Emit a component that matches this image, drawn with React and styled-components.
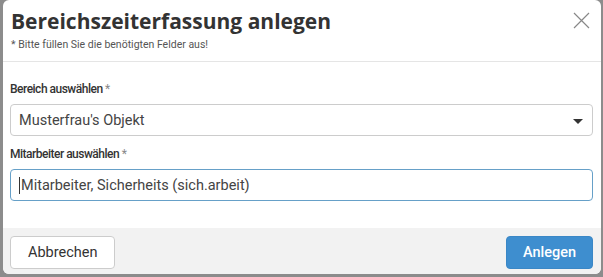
import React from 'react';
import styled, { createGlobalStyle } from 'styled-components';

const GlobalStyle = createGlobalStyle`
  html, body {
    margin: 0;
    padding: 0;
    background: #8c8c8c;
    font-family: Roboto, "Liberation Sans", sans-serif;
  }
`

const Backdrop = styled.div`
  width: 603px;
  height: 277px;
  padding: 0 2px 3px 3px;
  box-sizing: border-box;
`
const Modal = styled.div`
  height: 100%;
  background: #fff;
  border-radius: 6px;
  overflow: hidden;
  display: flex;
  flex-direction: column;
`
const Header = styled.div`
  position: relative;
  padding: 5px 8px 10px 8px;
  border-bottom: 1px solid #e5e5e5;
`
const Title = styled.h4`
  margin: 0;
  font-family: "Open Sans", Roboto, sans-serif;
  font-size: 21px;
  font-weight: 700;
  color: #333;
  line-height: 32px;
`
const Hint = styled.div`
  margin-top: 1px;
  font-size: 10.5px;
  color: #555;
`
const Close = styled.button`
  position: absolute;
  top: 11px;
  right: 10px;
  width: 19px;
  height: 19px;
  padding: 0;
  border: 0;
  background: none;
  cursor: pointer;
`
const Body = styled.div`
  flex: 1;
  padding: 20px 8px 0 7px;
`
const Group = styled.div`
  margin-bottom: 11px;
`
const Label = styled.label`
  display: block;
  font-size: 12px;
  line-height: 14px;
  font-weight: 500;
  letter-spacing: -0.5px;
  color: #333;
  margin-bottom: 8px;
`
const Required = styled.span`
  color: #888;
  font-weight: 400;
`
const Field = styled.div`
  position: relative;
  height: 32px;
  box-sizing: border-box;
  border: 1px solid ${p => (p.focused ? '#66a0c8' : '#ccc')};
  border-radius: 4px;
  display: flex;
  align-items: center;
  padding: 0 8px;
  font-size: 14.5px;
  color: #444;
`
const Caret = styled.span`
  position: absolute;
  right: 9px;
  top: 14px;
  border-left: 5px solid transparent;
  border-right: 5px solid transparent;
  border-top: 5px solid #333;
`
const TextCursor = styled.span`
  width: 1px;
  height: 17px;
  background: #333;
  margin-right: 1px;
`
const Footer = styled.div`
  background: #f2f2f2;
  padding: 8px 8px 5px 7px;
  display: flex;
  justify-content: space-between;
`
const Button = styled.button`
  height: 33px;
  padding: 0 ${p => (p.primary ? 16 : 17)}px;
  border-radius: 4px;
  font-family: Roboto, "Liberation Sans", sans-serif;
  font-size: 14.5px;
  border: 1px solid ${p => (p.primary ? '#3a87c6' : '#ccc')};
  background: ${p => (p.primary ? '#3e8ecf' : '#fff')};
  color: ${p => (p.primary ? '#fff' : '#333')};
  font-weight: ${p => (p.primary ? 500 : 400)};
`

export default function App() {
  return (
    <Backdrop>
      <GlobalStyle />
      <Modal>
        <Header>
          <Title>Bereichszeiterfassung anlegen</Title>
          <Hint>* Bitte füllen Sie die benötigten Felder aus!</Hint>
          <Close aria-label="Schließen">
            <svg width="19" height="19" viewBox="0 0 19 19">
              <path d="M2 2L17 17M17 2L2 17" stroke="#888" strokeWidth="1.2" fill="none" />
            </svg>
          </Close>
        </Header>
        <Body>
          <Group>
            <Label>Bereich auswählen <Required>*</Required></Label>
            <Field>
              Musterfrau's Objekt
              <Caret />
            </Field>
          </Group>
          <Group>
            <Label>Mitarbeiter auswählen <Required>*</Required></Label>
            <Field focused>
              <TextCursor />
              Mitarbeiter, Sicherheits (sich.arbeit)
            </Field>
          </Group>
        </Body>
        <Footer>
          <Button>Abbrechen</Button>
          <Button primary>Anlegen</Button>
        </Footer>
      </Modal>
    </Backdrop>
  )
}
